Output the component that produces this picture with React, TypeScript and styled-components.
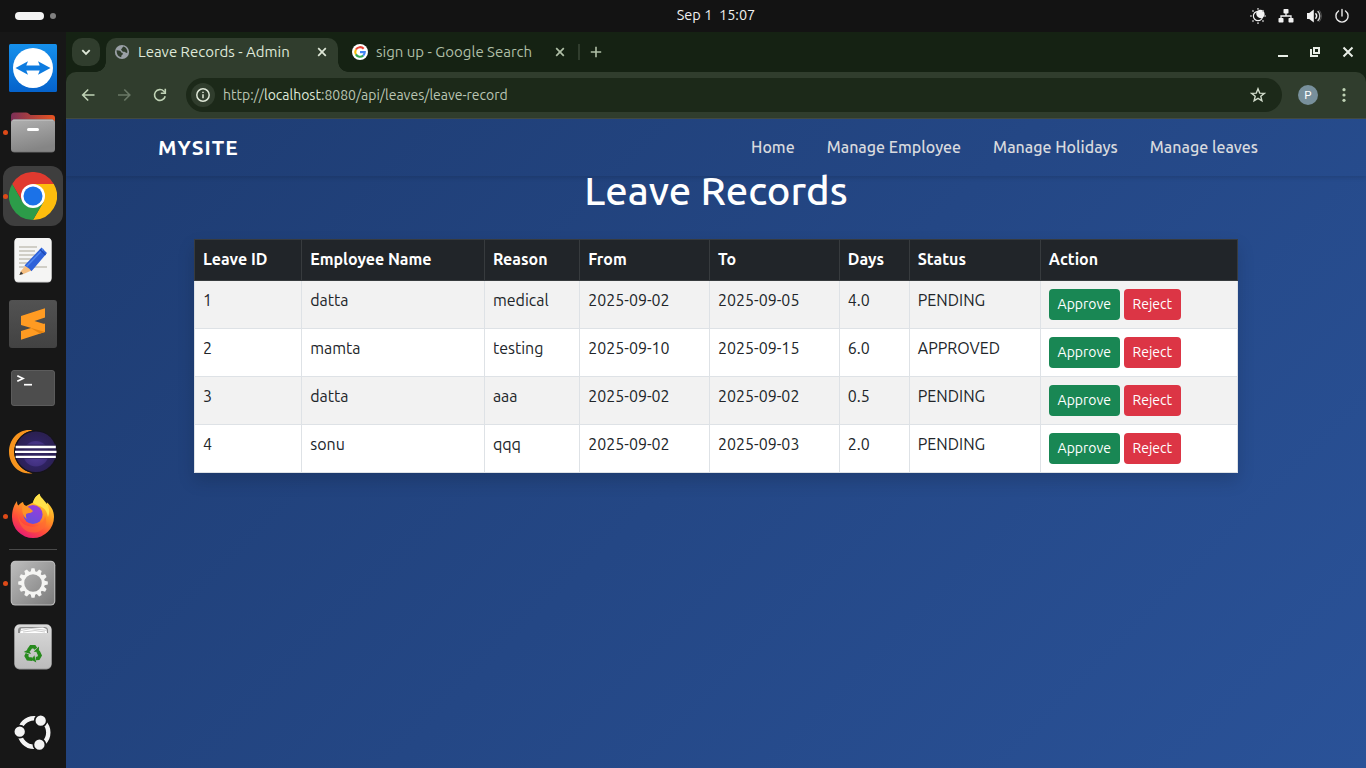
import React from "react";
import styled, { createGlobalStyle } from "styled-components";

const GlobalStyle = createGlobalStyle`
  *, *::before, *::after { box-sizing: border-box; }
  html, body { margin: 0; padding: 0; }
  body {
    font-family: Ubuntu, "Noto Sans", "Open Sans", sans-serif;
    background: #131313;
    overflow: hidden;
  }
  svg { display: block; }
`;

/* ---------- Desktop ---------- */

const Desktop = styled.div`
  display: grid;
  grid-template: 32px 1fr / 66px 1fr;
  width: 1366px;
  height: 768px;
`;

const TopBar = styled.header`
  grid-column: 1 / -1;
  display: grid;
  grid-template-columns: 616px 200px 1fr;
  align-items: center;
  background: #131313;
  color: #f0f0f0;
`;

const Workspaces = styled.div`
  display: flex;
  align-items: center;
  gap: 6px;
  padding-left: 15px;
`;

const WorkspaceDot = styled.span<{ $active?: boolean }>`
  width: ${(p) => (p.$active ? 29 : 6)}px;
  height: ${(p) => (p.$active ? 8 : 6)}px;
  border-radius: 4px;
  background: ${(p) => (p.$active ? "#f4f4f4" : "#808080")};
`;

const Clock = styled.time`
  text-align: center;
  font-size: 14.5px;
  font-weight: 400;
  line-height: 20px;
  white-space: pre;
  padding-bottom: 2px;
`;

const StatusArea = styled.div`
  display: flex;
  justify-content: flex-end;
  gap: 12px;
  padding-right: 16px;
`;

/* ---------- Dock ---------- */

const Dock = styled.nav`
  display: flex;
  flex-direction: column;
  padding-top: 4px;
  background: #171717;
`;

const DockSlot = styled.div`
  height: 64px;
  padding: 2px 3px;
`;

const DockTile = styled.div<{ $active?: boolean }>`
  display: flex;
  align-items: center;
  gap: 1px;
  width: 60px;
  height: 60px;
  border-radius: 12px;
  background: ${(p) => (p.$active ? "#3e3e3e" : "transparent")};
`;

const RunningDot = styled.span<{ $running?: boolean }>`
  width: 5px;
  height: 5px;
  border-radius: 50%;
  background: ${(p) => (p.$running ? "#dd4a18" : "transparent")};
`;

const DockDivider = styled.hr`
  width: 48px;
  height: 1px;
  margin: 1px 9px;
  border: 0;
  background: #4a4a4a;
`;

const DockSpacer = styled.div`
  height: 22px;
`;

/* ---------- Browser ---------- */

const Browser = styled.section`
  display: grid;
  grid-template-rows: 40px 47px 1fr;
  min-width: 0;
  background: #152213;
`;

const TabStrip = styled.div`
  display: flex;
  align-items: flex-start;
  padding: 6px 12px 0 6px;
`;

const TabSearch = styled.button`
  display: grid;
  place-items: center;
  width: 28px;
  height: 28px;
  margin-right: 6px;
  padding: 0;
  border: 0;
  border-radius: 10px;
  background: #303d2d;
`;

const Tab = styled.div<{ $active?: boolean }>`
  position: relative;
  display: flex;
  align-items: center;
  width: ${(p) => (p.$active ? 232 : 238)}px;
  height: ${(p) => (p.$active ? 34 : 28)}px;
  padding: 0 9px 0 ${(p) => (p.$active ? 8 : 14)}px;
  padding-bottom: ${(p) => (p.$active ? 6 : 0)}px;
  border-radius: 10px 10px 0 0;
  color: ${(p) => (p.$active ? "#dfe8d8" : "#afbfa6")};
  background: ${(p) => (p.$active ? "#303d2d" : "transparent")};

  &::before,
  &::after {
    content: "";
    display: ${(p) => (p.$active ? "block" : "none")};
    position: absolute;
    bottom: 0;
    width: 10px;
    height: 10px;
  }
  &::before {
    left: -10px;
    background: radial-gradient(circle at 0 0, transparent 9.5px, #303d2d 10px);
  }
  &::after {
    right: -10px;
    background: radial-gradient(circle at 100% 0, transparent 9.5px, #303d2d 10px);
  }
`;

const TabTitle = styled.span`
  flex: 1;
  margin-left: 8px;
  font-size: 15px;
  line-height: 20px;
  white-space: nowrap;
`;

const TabDivider = styled.span`
  width: 2px;
  height: 16px;
  margin: 6px 10px 0 2px;
  background: #303d2d;
`;

const NewTab = styled.div`
  padding-top: 8px;
`;

const WindowControls = styled.div`
  display: flex;
  gap: 21px;
  margin: 8px 0 0 auto;
`;

const Toolbar = styled.div`
  display: flex;
  align-items: center;
  padding: 0 14px 1px;
  border-radius: 10px 10px 0 0;
  border-bottom: 1px solid #434b42;
  background: #303d2d;
`;

const ToolButton = styled.span`
  display: grid;
  place-items: center;
  width: 16px;
  height: 16px;
  margin-right: 20px;
`;

const Omnibox = styled.div`
  display: flex;
  align-items: center;
  width: 1096px;
  height: 34px;
  margin: 1px 16px 0 -2px;
  padding: 0 16px 0 5px;
  border-radius: 17px;
  background: #1c2919;
`;

const SiteInfo = styled.span`
  display: grid;
  place-items: center;
  width: 24px;
  height: 24px;
  border-radius: 50%;
  background: #303d2d;
`;

const Url = styled.span`
  flex: 1;
  margin-left: 8px;
  font-size: 14px;
  line-height: 20px;
  color: #bac5b3;
`;

const UrlHost = styled.span`
  color: #dfe8d8;
`;

const Avatar = styled.span`
  display: grid;
  place-items: center;
  width: 20px;
  height: 20px;
  margin-right: 18px;
  border-radius: 50%;
  background: #78909c;
  color: #fff;
  font: 400 11.5px/20px Roboto, "Noto Sans", sans-serif;
`;

/* ---------- Web page ---------- */

const Page = styled.main`
  display: flex;
  flex-direction: column;
  background: linear-gradient(135deg, #1e3c72, #2a5298);
  color: #212529;
`;

const Navbar = styled.nav`
  display: flex;
  justify-content: space-between;
  align-items: center;
  height: 57.2px;
  padding: 0 108px 0 92px;
  box-shadow: 0 2px 4px rgba(0, 0, 0, 0.12);
`;

const Brand = styled.a`
  color: #fff;
  font-size: 20.8px;
  font-weight: 700;
  letter-spacing: 1px;
`;

const NavLinks = styled.div`
  display: flex;
  gap: 32px;
  padding-bottom: 2px;
`;

const NavLink = styled.a`
  color: #d8dade;
  font-size: 16px;
  font-weight: 500;
  line-height: 24px;
`;

const PageTitle = styled.h1`
  margin: -9.2px 0 24px;
  color: #fff;
  font-size: 40px;
  font-weight: 500;
  line-height: 48px;
  text-align: center;
`;

const LeaveTable = styled.table`
  width: 1044px;
  margin: 0 auto;
  table-layout: fixed;
  border-collapse: collapse;
  background: #fff;
  font-size: 16px;
  line-height: 24px;
  box-shadow: 0 8px 16px rgba(0, 0, 0, 0.15);
`;

const Column = styled.col<{ $width: number }>`
  width: ${(p) => p.$width}px;
`;

const HeadCell = styled.th`
  height: 41px;
  padding: 7px 8px 9px;
  border: 1px solid #373b3e;
  background: #212529;
  color: #fff;
  font-weight: 700;
  text-align: left;
  white-space: nowrap;
`;

const Row = styled.tr`
  background: #fff;
  &:nth-child(odd) {
    background: #f2f2f2;
  }
`;

const Cell = styled.td`
  height: 48px;
  padding: 7px 8px 8px;
  border: 1px solid #dee2e6;
  vertical-align: top;
  white-space: nowrap;
`;

const Actions = styled.div`
  display: flex;
  gap: 4px;
  padding-top: 1px;
`;

const ActionButton = styled.button<{ $kind: "approve" | "reject" }>`
  width: ${(p) => (p.$kind === "approve" ? 71 : 57)}px;
  height: 31px;
  padding: 0;
  border: 0;
  border-radius: 4px;
  background: ${(p) => (p.$kind === "approve" ? "#198754" : "#dc3545")};
  color: #fff;
  font: 400 14px/21px Ubuntu, "Noto Sans", sans-serif;
`;

/* ---------- Dock icons ---------- */

const DockSvg = ({ children }: { children: React.ReactNode }) => (
  <svg width="48" height="48" viewBox="0 0 48 48">{children}</svg>
);

const TeamViewerIcon = () => (
  <DockSvg>
    <defs>
      <linearGradient id="tv" x1="0" y1="0" x2="0" y2="1">
        <stop offset="0" stopColor="#1590ec" />
        <stop offset="1" stopColor="#0562cb" />
      </linearGradient>
    </defs>
    <rect width="48" height="48" rx="1.5" fill="url(#tv)" />
    <circle cx="24" cy="24" r="20" fill="#fff" />
    <path d="M6.5 24 19 17.3 17.3 21.6H30.7L29 17.3 41.5 24 29 30.7 30.7 26.4H17.3L19 30.7Z" fill="#0d7be0" />
  </DockSvg>
);

const FilesIcon = () => (
  <DockSvg>
    <defs>
      <linearGradient id="fb" x1="0" y1="0" x2="1" y2="0">
        <stop offset="0" stopColor="#7b2f57" />
        <stop offset="1" stopColor="#e95420" />
      </linearGradient>
      <linearGradient id="ff" x1="0" y1="0" x2="0.3" y2="1">
        <stop offset="0" stopColor="#b0b0b0" />
        <stop offset="1" stopColor="#858585" />
      </linearGradient>
    </defs>
    <path d="M2 8a3.500 3.500 0 0 1 3.500-3.500H17a4 4 0 0 1 2.500.9L21.500 7H43a3 3 0 0 1 3 3V20H2Z" fill="url(#fb)" />
    <rect x="2" y="11.500" width="44" height="33" rx="3.500" fill="#666" />
    <rect x="2" y="11.500" width="44" height="32.200" rx="3.500" fill="url(#ff)" />
    <path d="M4 12.200H44" stroke="#c8c8c8" strokeWidth=".8" />
    <rect x="18" y="20" width="12" height="3" rx="1.500" fill="#fff" />
  </DockSvg>
);

const ChromeIcon = () => (
  <DockSvg>
    <path d="M3.200 12A24 24 0 0 1 44.800 12L24 12 13.600 30Z" fill="#e03a2f" />
    <path d="M44.800 12A24 24 0 0 1 24 48L34.400 30 24 12Z" fill="#fdbd0d" />
    <path d="M24 48A24 24 0 0 1 3.200 12L13.600 30 34.400 30Z" fill="#2c9c49" />
    <circle cx="24" cy="24" r="12" fill="#fff" />
    <circle cx="24" cy="24" r="9.500" fill="#1b72e8" />
  </DockSvg>
);

const EditorIcon = () => (
  <DockSvg>
    <rect x="5.500" y="2" width="37" height="44.500" rx="4" fill="#d4d4d4" />
    <rect x="5.500" y="2" width="37" height="43.500" rx="4" fill="#f5f5f4" />
    <path d="M10 11H28M10 15H26M10 19H26M10 23H23M10 27H20M10 31H38" stroke="#c3c1b6" strokeWidth="1.700" />
    <path d="M12 35 17 29 22.500 34.500 14.500 38 10.500 38.800Z" fill="#f5be80" />
    <path d="M10.300 39 12 35.500 14.200 37.900Z" fill="#3a3a3a" />
    <path d="M15.500 29.500 32.500 11.500 38 17 22.500 35.300 20 32.500Z" fill="#2f62d9" />
    <path d="M17.500 30.500 34.300 13" stroke="#4f86ee" strokeWidth="1.500" />
    <path d="M31 13.500 36.500 19" stroke="#1c48b4" strokeWidth="1.200" />
  </DockSvg>
);

const SublimeIcon = () => (
  <DockSvg>
    <defs>
      <linearGradient id="sb" x1="0" y1="0" x2="0" y2="1">
        <stop offset="0" stopColor="#525252" />
        <stop offset="1" stopColor="#424242" />
      </linearGradient>
    </defs>
    <rect width="48" height="48" rx="3" fill="url(#sb)" />
    <path d="M36 23.500V32L12 39.700V31L22 28Z" fill="#ff9b22" />
    <path d="M36 25V32L31 33.500 22 28.200Z" fill="#e5820f" />
    <path d="M36 8.300V17.500L25.500 21 36 24.200V32L12 25V16Z" fill="#ff9b22" />
  </DockSvg>
);

const TerminalIcon = () => (
  <DockSvg>
    <rect x="2" y="6" width="44" height="36" rx="3.500" fill="#626262" />
    <rect x="2.700" y="6.700" width="42.600" height="34.600" rx="3" fill="#4d4d4d" />
    <path d="M8.300 11.800 14 14.500 8.300 17.200" fill="none" stroke="#fff" strokeWidth="1.700" />
    <path d="M15 20.700H23" stroke="#fff" strokeWidth="1.700" />
  </DockSvg>
);

const EclipseIcon = () => (
  <DockSvg>
    <defs>
      <radialGradient id="ec" cx=".5" cy=".55" r=".5">
        <stop offset="0" stopColor="#54409c" />
        <stop offset=".6" stopColor="#41307f" />
        <stop offset=".65" stopColor="#2e2260" />
        <stop offset="1" stopColor="#2b2052" />
      </radialGradient>
    </defs>
    <path d="M23 2A22 22 0 0 0 23 45.400A21.850 21.850 0 0 1 23 2Z" fill="#f7941e" />
    <path d="M23.500 2.200C10 0 0 11 0 23.700S10 47.200 23.500 45.200C13 43 5 34 5 23.700S13 4.400 23.500 2.200Z" fill="#f7941e" />
    <circle cx="26.700" cy="23.700" r="21.300" fill="#15121c" />
    <circle cx="26.900" cy="23.700" r="20.300" fill="url(#ec)" />
    <path d="M6.800 16.500H47V30.700H6.800Z" fill="#2b2052" opacity=".8" />
    <path d="M6.700 19H46.800M6 23.900H47.500M6.700 28.800H46.800" stroke="#fff" strokeWidth="2.300" />
  </DockSvg>
);

const FirefoxIcon = () => (
  <DockSvg>
    <defs>
      <linearGradient id="fx" x1=".8" y1=".1" x2=".3" y2="1">
        <stop offset="0" stopColor="#ffe03a" />
        <stop offset=".35" stopColor="#ff9a22" />
        <stop offset=".7" stopColor="#ff4a3c" />
        <stop offset="1" stopColor="#e61a76" />
      </linearGradient>
      <linearGradient id="fg" x1=".7" y1="0" x2=".3" y2="1">
        <stop offset="0" stopColor="#9a3cdc" />
        <stop offset="1" stopColor="#6251dc" />
      </linearGradient>
    </defs>
    <path d="M3 25C3 18 5 13 8 9C8 11 8.500 12.500 9.300 13.500C11 11.500 12.500 10.600 14 10C14 12 15 13.200 17 14L24 10.500C25 6 28 3.500 30.500 1.800C31 6.500 34.500 9.500 38 12.500C38 11.600 38 11 37.800 10.200C42.500 14.500 45 19 45 25A21 21 0 0 1 3 25Z" fill="url(#fx)" />
    <path d="M30.500 1.800C31 7 44 12 39 25C38 18 34 15 30 14L24 11C25 6 28 3.500 30.500 1.800Z" fill="#ffe24a" />
    <circle cx="24" cy="22.500" r="9.600" fill="url(#fg)" />
    <path d="M14 10C14 12 15 13.200 17 14C19.500 15 22 17 24 19C22.500 21.300 19.500 20.800 17.500 21.800C16.500 22.500 17 25 17.500 27C13.500 24 12 18 14 10Z" fill="#ff9427" />
    <path d="M9 22C10 28 13 32 19 34C28 37 35 31 36 24C39 31 36 37 29 40C17 43 9 34 9 22Z" fill="#ff6a32" opacity=".6" />
  </DockSvg>
);

const SettingsIcon = () => (
  <DockSvg>
    <defs>
      <linearGradient id="st" x1="0" y1="0" x2="1" y2="1">
        <stop offset="0" stopColor="#bdbdbd" />
        <stop offset="1" stopColor="#7b7b7b" />
      </linearGradient>
    </defs>
    <rect x="1.700" y="1.700" width="44.600" height="44.800" rx="4.500" fill="#bdbdbd" />
    <rect x="2.700" y="2.700" width="42.600" height="42.800" rx="3.700" fill="url(#st)" />
    <circle cx="24" cy="24" r="10.300" fill="none" stroke="#f5f5f3" strokeWidth="3" />
    <g fill="#f5f5f3">
      {Array.from({ length: 12 }, (_, i) => (
        <path key={i} d="M21.500 13.500 22.500 9.200H25.500L26.500 13.500Z" transform={`rotate(${i * 30} 24 24)`} />
      ))}
    </g>
  </DockSvg>
);

const TrashIcon = () => (
  <DockSvg>
    <defs>
      <linearGradient id="tr" x1="0" y1="0" x2="0" y2="1">
        <stop offset="0" stopColor="#dadada" />
        <stop offset="1" stopColor="#bcbcbc" />
      </linearGradient>
    </defs>
    <rect x="5.500" y="1.500" width="37" height="45" rx="5" fill="#999" />
    <rect x="5.500" y="1.500" width="37" height="44" rx="5" fill="url(#tr)" />
    <path d="M9 10V7.500A3.500 3.500 0 0 1 12.500 4H35.500A3.500 3.500 0 0 1 39 7.500V10Z" fill="#8c8c8c" />
    <path d="M11 10 12 5.500 34 4.500 37.500 6 38 10Z" fill="#fff" />
    <path d="M12 7.500 22 5.500 37 7.300M14 9 26 7.600 36 9" fill="none" stroke="#aaa" strokeWidth=".6" />
    <g fill="none" stroke="#278a1d" strokeWidth="4.200" transform="translate(3.6 4.3) scale(.85)">
      {[0, 120, 240].map((a) => (
        <g key={a} transform={`rotate(${a} 24 31)`}>
          <path d="M18.600 27.300 21.700 22.800H25.600L27.200 25.200" />
          <path d="M24.800 28.700 31 29 31 22.500Z" fill="#278a1d" stroke="none" />
        </g>
      ))}
    </g>
  </DockSvg>
);

const UbuntuIcon = () => (
  <DockSvg>
    <circle cx="25" cy="23.500" r="14.300" fill="none" stroke="#f4f4f4" strokeWidth="4.400" />
    <g fill="#f4f4f4" stroke="#171717" strokeWidth="1.700">
      <circle cx="10.700" cy="22.700" r="6" />
      <circle cx="31.700" cy="11.700" r="6" />
      <circle cx="30.400" cy="35.700" r="6" />
    </g>
  </DockSvg>
);

/* ---------- Top bar icons ---------- */

const NightLightIcon = () => (
  <svg width="16" height="16" viewBox="0 0 16 16">
    <circle cx="8" cy="8" r="4.600" fill="none" stroke="#f2f2f2" strokeWidth="1.200" />
    <path d="M6.300 4.500A4.300 4.300 0 1 1 11.500 10.200C8.500 10.600 5.800 8 6.300 4.500Z" fill="#f2f2f2" />
    <g stroke="#b5b5b5" strokeWidth="1.600">
      {Array.from({ length: 8 }, (_, i) => (
        <path key={i} d="M8 .1V1.800" transform={`rotate(${i * 45} 8 8)`} />
      ))}
    </g>
  </svg>
);

const NetworkIcon = () => (
  <svg width="16" height="16" viewBox="0 0 16 16">
    <g fill="#f2f2f2">
      <rect x="5.500" y="1" width="5" height="4.500" rx=".8" />
      <rect x=".5" y="10" width="5" height="4.500" rx=".8" />
      <rect x="10.500" y="10" width="5" height="4.500" rx=".8" />
    </g>
    <path d="M8 5V8M3 11V8H13V11" fill="none" stroke="#f2f2f2" strokeWidth="1.300" />
  </svg>
);

const VolumeIcon = () => (
  <svg width="16" height="16" viewBox="0 0 16 16">
    <path d="M1 5H3.200L7.800 1.500V14.500L3.200 11H1Z" fill="#f2f2f2" />
    <g fill="none" strokeWidth="1.400" strokeLinecap="round">
      <path d="M9.800 5.800A3.500 3.500 0 0 1 9.800 10.200" stroke="#f2f2f2" />
      <path d="M12 3.500A6.500 6.500 0 0 1 12 12.500" stroke="#d0d0d0" />
      <path d="M13.500 2.500A8.500 8.500 0 0 1 13.500 13.500" stroke="#565656" strokeWidth="1" />
    </g>
  </svg>
);

const PowerIcon = () => (
  <svg width="16" height="16" viewBox="0 0 16 16">
    <path d="M4.500 3A6.100 6.100 0 1 0 11.500 3M8 1.500V8" fill="none" stroke="#ececec" strokeWidth="1.400" strokeLinecap="round" />
  </svg>
);

/* ---------- Browser icons ---------- */

const ChevronIcon = () => (
  <svg width="12" height="12" viewBox="0 0 12 12">
    <path d="M2.300 4.200 6 7.900 9.700 4.200" fill="none" stroke="#dfe8d8" strokeWidth="1.900" />
  </svg>
);

const GlobeIcon = () => (
  <svg width="16" height="16" viewBox="0 0 16 16">
    <circle cx="8" cy="8" r="7.100" fill="#9aa0a6" />
    <path d="M2.600 6.200C5.500 6.200 7 7 7.200 8.500C8.500 8.500 9.200 9.200 8.800 10.600C7.600 10.900 7.200 12 7.300 13.200C4.500 12.800 2.500 10.500 2.600 6.200Z" fill="#303d2d" />
    <path d="M7 5C8.500 5 8 3.300 9.400 2.500C12 3.200 13.600 5.600 13.400 8.600C12.600 9.400 11.800 8.500 10.600 7.800C9.200 8 7.600 7.500 7 5Z" fill="#303d2d" />
  </svg>
);

const GoogleIcon = () => (
  <svg width="16" height="16" viewBox="0 0 16 16">
    <circle cx="8" cy="8" r="8" fill="#fff" />
    <g fill="none" strokeWidth="2.100">
      <path d="M11.700 4.800A4.800 4.800 0 0 0 3.900 5.600" stroke="#ea4335" />
      <path d="M3.900 5.600A4.800 4.800 0 0 0 3.900 10.400" stroke="#fbbc05" />
      <path d="M3.900 10.400A4.800 4.800 0 0 0 11.200 11.600" stroke="#34a853" />
      <path d="M11.200 11.600A4.700 4.700 0 0 0 12.800 8.100H8" stroke="#4285f4" />
    </g>
  </svg>
);

const CloseIcon = ({ color }: { color: string }) => (
  <svg width="14" height="14" viewBox="0 0 14 14">
    <path d="M3.200 3.200 10.800 10.800M10.800 3.200 3.200 10.800" stroke={color} strokeWidth="1.700" />
  </svg>
);

const WindowCloseIcon = () => (
  <svg width="12" height="12" viewBox="0 0 12 12">
    <path d="M1.500 1.500 10.500 10.500M10.500 1.500 1.500 10.500" stroke="#e8eee6" strokeWidth="2" />
  </svg>
);

const PlusIcon = () => (
  <svg width="12" height="12" viewBox="0 0 12 12">
    <path d="M6 .8V11.200M.8 6H11.200" stroke="#afbfa6" strokeWidth="1.600" />
  </svg>
);

const MinimizeIcon = () => (
  <svg width="12" height="12" viewBox="0 0 12 12">
    <path d="M2 10H12" stroke="#e8eee6" strokeWidth="2" />
  </svg>
);

const RestoreIcon = () => (
  <svg width="12" height="12" viewBox="0 0 12 12">
    <path d="M5 2H10V7H5Z M2 3V10H9" fill="none" stroke="#e8eee6" strokeWidth="2" />
  </svg>
);

const ArrowIcon = ({ forward }: { forward?: boolean }) => (
  <svg width="16" height="16" viewBox="0 0 16 16">
    <path
      d={forward ? "M2 8H13.500M8.300 2.500 13.800 8 8.300 13.500" : "M14.500 8H2.800M8.200 2.500 2.700 8 8.200 13.500"}
      fill="none"
      stroke={forward ? "#6a7866" : "#bfd2b5"}
      strokeWidth="1.600"
    />
  </svg>
);

const ReloadIcon = () => (
  <svg width="16" height="16" viewBox="0 0 16 16">
    <path d="M13.200 9.200A5.400 5.400 0 1 1 11.800 4.200L13 5.500" fill="none" stroke="#bfd2b5" strokeWidth="1.600" />
    <path d="M13.300 1.800V6.300H8.800" fill="none" stroke="#bfd2b5" strokeWidth="1.600" />
  </svg>
);

const InfoIcon = () => (
  <svg width="16" height="16" viewBox="0 0 16 16">
    <circle cx="8" cy="8" r="6.200" fill="none" stroke="#dfe8d8" strokeWidth="1.500" />
    <path d="M8 7.200V11.200M8 4.700V6.100" stroke="#dfe8d8" strokeWidth="1.500" />
  </svg>
);

const StarIcon = () => (
  <svg width="16" height="16" viewBox="0 0 16 16">
    <path d="M8 1.800 9.700 6.100 14.300 6.400 10.800 9.300 11.900 13.800 8 11.300 4.100 13.800 5.200 9.300 1.700 6.400 6.300 6.100Z" fill="none" stroke="#d3ddcc" strokeWidth="1.400" />
  </svg>
);

const MenuDotsIcon = () => (
  <svg width="16" height="16" viewBox="0 0 16 16">
    <g fill="#bfd2b5">
      <circle cx="8" cy="2.700" r="1.600" />
      <circle cx="8" cy="8" r="1.600" />
      <circle cx="8" cy="13.300" r="1.600" />
    </g>
  </svg>
);

/* ---------- Data ---------- */

type DockApp = { name: string; Icon: React.ComponentType; running?: boolean; active?: boolean };

const pinnedApps: DockApp[] = [
  { name: "teamviewer", Icon: TeamViewerIcon },
  { name: "files", Icon: FilesIcon, running: true },
  { name: "chrome", Icon: ChromeIcon, running: true, active: true },
  { name: "editor", Icon: EditorIcon },
  { name: "sublime", Icon: SublimeIcon },
  { name: "terminal", Icon: TerminalIcon },
  { name: "eclipse", Icon: EclipseIcon },
  { name: "firefox", Icon: FirefoxIcon, running: true },
];

const systemApps: DockApp[] = [
  { name: "settings", Icon: SettingsIcon, running: true },
  { name: "trash", Icon: TrashIcon },
];

const columns = [
  { label: "Leave ID", width: 107.2 },
  { label: "Employee Name", width: 182.7 },
  { label: "Reason", width: 95.3 },
  { label: "From", width: 129.8 },
  { label: "To", width: 129.8 },
  { label: "Days", width: 70 },
  { label: "Status", width: 131 },
  { label: "Action", width: 197.2 },
];

const leaves = [
  { id: 1, name: "datta", reason: "medical", from: "2025-09-02", to: "2025-09-05", days: "4.0", status: "PENDING" },
  { id: 2, name: "mamta", reason: "testing", from: "2025-09-10", to: "2025-09-15", days: "6.0", status: "APPROVED" },
  { id: 3, name: "datta", reason: "aaa", from: "2025-09-02", to: "2025-09-02", days: "0.5", status: "PENDING" },
  { id: 4, name: "sonu", reason: "qqq", from: "2025-09-02", to: "2025-09-03", days: "2.0", status: "PENDING" },
];

const DockItem = ({ Icon, running, active }: DockApp) => (
  <DockSlot>
    <DockTile $active={active}>
      <RunningDot $running={running} />
      <Icon />
    </DockTile>
  </DockSlot>
);

export default function App() {
  return (
    <>
      <GlobalStyle />
      <Desktop>
        <TopBar>
          <Workspaces>
            <WorkspaceDot $active />
            <WorkspaceDot />
          </Workspaces>
          <Clock>{"Sep 1  15:07"}</Clock>
          <StatusArea>
            <NightLightIcon />
            <NetworkIcon />
            <VolumeIcon />
            <PowerIcon />
          </StatusArea>
        </TopBar>

        <Dock>
          {pinnedApps.map((app) => (
            <DockItem key={app.name} {...app} />
          ))}
          <DockDivider />
          {systemApps.map((app) => (
            <DockItem key={app.name} {...app} />
          ))}
          <DockSpacer />
          <DockItem name="apps" Icon={UbuntuIcon} />
        </Dock>

        <Browser>
          <TabStrip>
            <TabSearch>
              <ChevronIcon />
            </TabSearch>
            <Tab $active>
              <GlobeIcon />
              <TabTitle>Leave Records - Admin</TabTitle>
              <CloseIcon color="#dfe8d8" />
            </Tab>
            <Tab>
              <GoogleIcon />
              <TabTitle>sign up - Google Search</TabTitle>
              <CloseIcon color="#afbfa6" />
            </Tab>
            <TabDivider />
            <NewTab>
              <PlusIcon />
            </NewTab>
            <WindowControls>
              <MinimizeIcon />
              <RestoreIcon />
              <WindowCloseIcon />
            </WindowControls>
          </TabStrip>

          <Toolbar>
            <ToolButton>
              <ArrowIcon />
            </ToolButton>
            <ToolButton>
              <ArrowIcon forward />
            </ToolButton>
            <ToolButton>
              <ReloadIcon />
            </ToolButton>
            <Omnibox>
              <SiteInfo>
                <InfoIcon />
              </SiteInfo>
              <Url>
                http://<UrlHost>localhost</UrlHost>:8080/api/leaves/leave-record
              </Url>
              <StarIcon />
            </Omnibox>
            <Avatar>P</Avatar>
            <MenuDotsIcon />
          </Toolbar>

          <Page>
            <Navbar>
              <Brand>MYSITE</Brand>
              <NavLinks>
                <NavLink>Home</NavLink>
                <NavLink>Manage Employee</NavLink>
                <NavLink>Manage Holidays</NavLink>
                <NavLink>Manage leaves</NavLink>
              </NavLinks>
            </Navbar>
            <PageTitle>Leave Records</PageTitle>
            <LeaveTable>
              <colgroup>
                {columns.map((c) => (
                  <Column key={c.label} $width={c.width} />
                ))}
              </colgroup>
              <thead>
                <tr>
                  {columns.map((c) => (
                    <HeadCell key={c.label}>{c.label}</HeadCell>
                  ))}
                </tr>
              </thead>
              <tbody>
                {leaves.map((l) => (
                  <Row key={l.id}>
                    <Cell>{l.id}</Cell>
                    <Cell>{l.name}</Cell>
                    <Cell>{l.reason}</Cell>
                    <Cell>{l.from}</Cell>
                    <Cell>{l.to}</Cell>
                    <Cell>{l.days}</Cell>
                    <Cell>{l.status}</Cell>
                    <Cell>
                      <Actions>
                        <ActionButton $kind="approve">Approve</ActionButton>
                        <ActionButton $kind="reject">Reject</ActionButton>
                      </Actions>
                    </Cell>
                  </Row>
                ))}
              </tbody>
            </LeaveTable>
          </Page>
        </Browser>
      </Desktop>
    </>
  );
}
